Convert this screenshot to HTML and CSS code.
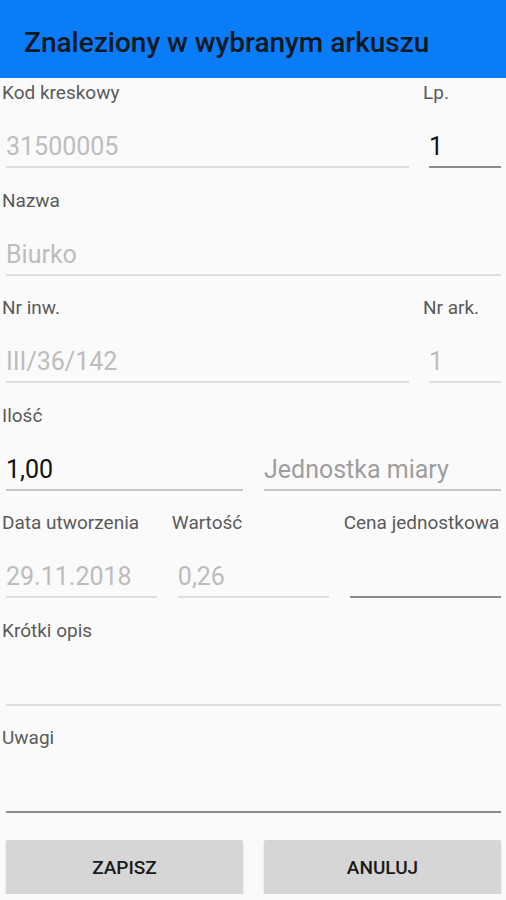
FILE: index.html
```html
<!DOCTYPE html>
<html lang="pl">
<head>
<meta charset="utf-8">
<title>Znaleziony w wybranym arkuszu</title>
<link rel="stylesheet" href="styles.css">
</head>
<body>
<header class="appbar">Znaleziony w wybranym arkuszu</header>
<main class="form">
  <div class="row cols-main-narrow">
    <div class="field">
      <div class="label">Kod kreskowy</div>
      <div class="input disabled"><span class="value">31500005</span></div>
    </div>
    <div class="field">
      <div class="label">Lp.</div>
      <div class="input active"><span class="value">1</span></div>
    </div>
  </div>
  <div class="row">
    <div class="field">
      <div class="label">Nazwa</div>
      <div class="input disabled"><span class="value">Biurko</span></div>
    </div>
  </div>
  <div class="row cols-main-narrow">
    <div class="field">
      <div class="label">Nr inw.</div>
      <div class="input disabled"><span class="value">III/36/142</span></div>
    </div>
    <div class="field">
      <div class="label">Nr ark.</div>
      <div class="input disabled"><span class="value">1</span></div>
    </div>
  </div>
  <div class="row cols-2">
    <div class="field">
      <div class="label">Ilość</div>
      <div class="input soft"><span class="value">1,00</span></div>
    </div>
    <div class="field">
      <div class="label empty"></div>
      <div class="input soft"><span class="value hint">Jednostka miary</span></div>
    </div>
  </div>
  <div class="row cols-3">
    <div class="field">
      <div class="label">Data utworzenia</div>
      <div class="input disabled"><span class="value">29.11.2018</span></div>
    </div>
    <div class="field">
      <div class="label">Wartość</div>
      <div class="input disabled"><span class="value">0,26</span></div>
    </div>
    <div class="field">
      <div class="label">Cena jednostkowa</div>
      <div class="input active"><span class="value"></span></div>
    </div>
  </div>
  <div class="row">
    <div class="field">
      <div class="label">Krótki opis</div>
      <div class="input disabled"><span class="value"></span></div>
    </div>
  </div>
  <div class="row">
    <div class="field">
      <div class="label">Uwagi</div>
      <div class="input active"><span class="value"></span></div>
    </div>
  </div>
  <div class="buttons">
    <button class="btn" type="button">ZAPISZ</button>
    <button class="btn" type="button">ANULUJ</button>
  </div>
</main>
</body>
</html>
```
FILE: styles.css
```css
* { box-sizing: border-box; }
html, body {
  margin: 0;
  padding: 0;
  background: #fafafa;
  font-family: Roboto, "Liberation Sans", sans-serif;
}
.appbar {
  height: 78px;
  padding: 7px 0 0 24px;
  line-height: 71px;
  font-size: 28px;
  font-weight: 500;
  color: #0e1822;
  background: #0a7cf7;
  white-space: nowrap;
}
.form {
  display: flex;
  flex-direction: column;
  gap: 24.5px;
  padding: 7px 5px 0 6px;
}
.row {
  display: grid;
  grid-template-columns: 1fr;
}
.cols-main-narrow { grid-template-columns: 1fr 72px; column-gap: 20px; }
.cols-2 { grid-template-columns: 1fr 1fr; column-gap: 21px; }
.cols-3 { grid-template-columns: 1fr 1fr 1fr; column-gap: 20.5px; }
.field { min-width: 0; }
.label {
  height: 20px;
  line-height: 16px;
  font-size: 19px;
  color: #5a5a5a;
  margin-left: -4px;
  white-space: nowrap;
}
.field + .field .label { margin-left: -6px; }
.input {
  height: 63px;
  display: flex;
  align-items: flex-end;
  padding-bottom: 4px;
  border-bottom: 2px solid #dedede;
}
.input.active { border-bottom-color: #8c8c8c; }
.input.soft { border-bottom-color: #c6c6c6; }
.value {
  display: block;
  line-height: 30px;
  height: 30px;
  font-size: 25px;
  color: #111;
  white-space: nowrap;
}
.disabled .value { color: #bdbdbd; }
.value.hint { color: #9e9e9e; }
.buttons {
  display: grid;
  grid-template-columns: 1fr 1fr;
  column-gap: 21px;
  margin-top: 2.5px;
}
.btn {
  height: 54px;
  border: none;
  border-radius: 2px;
  background: #d6d6d6;
  box-shadow: 0 2px 2px rgba(0, 0, 0, 0.18);
  font-family: Roboto, "Liberation Sans", sans-serif;
  font-size: 19px;
  font-weight: 500;
  color: #1a1a1a;
  padding: 0;
}
```
